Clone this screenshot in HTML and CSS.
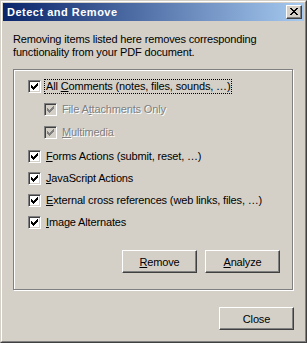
FILE: index.html
```html
<!DOCTYPE html>
<html lang="en">
<head>
  <meta charset="UTF-8" />
  <title>Detect and Remove</title>
  <link rel="stylesheet" href="styles.css">
</head>
<body>

<div class="window">
  <div class="frame">
    <div class="titlebar">
      <span class="title">Detect and Remove</span>
      <span class="close-x">
        <svg width="8" height="7" viewBox="0 0 8 7" shape-rendering="crispEdges">
          <path d="M0 0h2v1h-2zM6 0h2v1h-2zM1 1h2v1h-2zM5 1h2v1h-2zM2 2h4v1h-4zM3 3h2v1h-2zM2 4h4v1h-4zM1 5h2v1h-2zM5 5h2v1h-2zM0 6h2v1h-2zM6 6h2v1h-2z" fill="#000"/>
        </svg>
      </span>
    </div>

    <div class="content">
      <p class="intro">Removing items listed here removes corresponding functionality from your PDF document.</p>

      <div class="group">
        <label class="row">
          <span class="box"><svg class="tick" width="7" height="7" viewBox="0 0 7 7" shape-rendering="crispEdges"><path d="M6 0h1v3h-1v1h-1v1h-1v1h-1v1h-1v-1h-1v-1h-1v-3h1v1h1v1h1v-1h1v-1h1z"/></svg></span>
          <span class="text focus">All <u>C</u>omments (notes, files, sounds, …)</span>
        </label>
        <label class="row sub disabled">
          <span class="box"><svg class="tick" width="7" height="7" viewBox="0 0 7 7" shape-rendering="crispEdges"><path d="M6 0h1v3h-1v1h-1v1h-1v1h-1v1h-1v-1h-1v-1h-1v-3h1v1h1v1h1v-1h1v-1h1z"/></svg></span>
          <span class="text">File A<u>t</u>tachments Only</span>
        </label>
        <label class="row sub disabled">
          <span class="box"><svg class="tick" width="7" height="7" viewBox="0 0 7 7" shape-rendering="crispEdges"><path d="M6 0h1v3h-1v1h-1v1h-1v1h-1v1h-1v-1h-1v-1h-1v-3h1v1h1v1h1v-1h1v-1h1z"/></svg></span>
          <span class="text"><u>M</u>ultimedia</span>
        </label>
        <label class="row after-sub">
          <span class="box"><svg class="tick" width="7" height="7" viewBox="0 0 7 7" shape-rendering="crispEdges"><path d="M6 0h1v3h-1v1h-1v1h-1v1h-1v1h-1v-1h-1v-1h-1v-3h1v1h1v1h1v-1h1v-1h1z"/></svg></span>
          <span class="text"><u>F</u>orms Actions (submit, reset, …)</span>
        </label>
        <label class="row">
          <span class="box"><svg class="tick" width="7" height="7" viewBox="0 0 7 7" shape-rendering="crispEdges"><path d="M6 0h1v3h-1v1h-1v1h-1v1h-1v1h-1v-1h-1v-1h-1v-3h1v1h1v1h1v-1h1v-1h1z"/></svg></span>
          <span class="text"><u>J</u>avaScript Actions</span>
        </label>
        <label class="row">
          <span class="box"><svg class="tick" width="7" height="7" viewBox="0 0 7 7" shape-rendering="crispEdges"><path d="M6 0h1v3h-1v1h-1v1h-1v1h-1v1h-1v-1h-1v-1h-1v-3h1v1h1v1h1v-1h1v-1h1z"/></svg></span>
          <span class="text"><u>E</u>xternal cross references (web links, files, …)</span>
        </label>
        <label class="row">
          <span class="box"><svg class="tick" width="7" height="7" viewBox="0 0 7 7" shape-rendering="crispEdges"><path d="M6 0h1v3h-1v1h-1v1h-1v1h-1v1h-1v-1h-1v-1h-1v-3h1v1h1v1h1v-1h1v-1h1z"/></svg></span>
          <span class="text"><u>I</u>mage Alternates</span>
        </label>

        <div class="group-buttons">
          <button class="btn"><u>R</u>emove</button>
          <button class="btn"><u>A</u>nalyze</button>
        </div>
      </div>

      <div class="footer">
        <button class="btn">Close</button>
      </div>
    </div>
  </div>
</div>

</body>
</html>
```

FILE: styles.css
```css
* {
  margin: 0;
  padding: 0;
  box-sizing: border-box;
}

body {
  font-family: Tahoma, 'Liberation Sans', sans-serif;
  font-size: 11px;
  letter-spacing: -0.15px;
  color: #000;
  background: #d4d0c8;
}

u {
  text-decoration: underline;
  text-underline-offset: 1px;
}

.window {
  width: 307px;
  height: 343px;
  border: 1px solid;
  border-color: #d4d0c8 #404040 #404040 #d4d0c8;
}

.frame {
  height: 100%;
  border: 1px solid;
  border-color: #fff #808080 #808080 #fff;
  padding: 1px;
  display: flex;
  flex-direction: column;
}

.titlebar {
  height: 18px;
  background: linear-gradient(90deg, #0a246a, #a6caf0);
  display: flex;
  align-items: center;
  justify-content: space-between;
  padding: 0 2px 0 4px;
}

.title {
  color: #fff;
  font-weight: bold;
  font-size: 11px;
  letter-spacing: 0.5px;
}

.close-x {
  width: 16px;
  height: 14px;
  background: #d4d0c8;
  border: 1px solid;
  border-color: #fff #404040 #404040 #fff;
  box-shadow: inset -1px -1px 0 #808080;
  display: flex;
  align-items: center;
  justify-content: center;
  padding: 0 1px 1px 0;
}

.close-x svg {
  display: block;
}

.content {
  flex: 1;
  padding: 12px 10px 0 10px;
  display: flex;
  flex-direction: column;
}

.intro {
  line-height: 13px;
  width: 260px;
}

/* etched frame: grey line, white line one pixel down-right */
.group {
  margin-top: 10px;
  width: 280px;
  height: 221px;
  border: 1px solid #808080;
  box-shadow: inset 1px 1px 0 #fff, 1px 1px 0 #fff;
  display: flex;
  flex-direction: column;
  padding: 5px 0 0 14px;
}

.row {
  display: flex;
  align-items: center;
  height: 22px;
}

.row:first-child {
  height: 23px;
}

.row.sub {
  height: 23px;
  padding-left: 16px;
}

.row.after-sub {
  margin-top: 1px;
}

.box {
  width: 13px;
  height: 13px;
  background: #fff;
  border: 1px solid;
  border-color: #808080 #fff #fff #808080;
  box-shadow: inset 1px 1px 0 #404040, inset -1px -1px 0 #d4d0c8;
  display: flex;
  align-items: center;
  justify-content: center;
  margin-right: 4px;
}

.tick {
  display: block;
  fill: #000;
}

.text {
  padding: 0 1px;
  line-height: 13px;
}

.focus {
  outline: 1px dotted #000;
  outline-offset: 0;
}

.disabled .box {
  background: #d4d0c8;
}

.disabled .tick {
  fill: #808080;
}

.disabled .text {
  color: #808080;
  text-shadow: 1px 1px 0 #fff;
}

.group-buttons {
  margin-top: auto;
  margin-bottom: 16px;
  display: flex;
  justify-content: flex-end;
  gap: 8px;
  padding-right: 12px;
}

.btn {
  width: 75px;
  height: 23px;
  font-family: Tahoma, 'Liberation Sans', sans-serif;
  font-size: 11px;
  letter-spacing: -0.15px;
  color: #000;
  background: #d4d0c8;
  border: 1px solid;
  border-color: #fff #404040 #404040 #fff;
  box-shadow: inset -1px -1px 0 #808080;
}

.footer {
  display: flex;
  justify-content: flex-end;
  width: 281px;
  margin-top: 17px;
}
```
